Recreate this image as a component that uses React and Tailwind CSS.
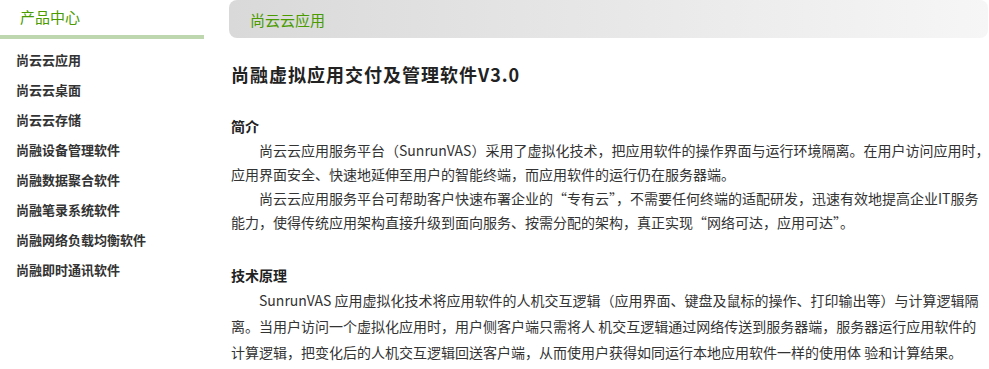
const menu = [
  "尚云云应用",
  "尚云云桌面",
  "尚云云存储",
  "尚融设备管理软件",
  "尚融数据聚合软件",
  "尚融笔录系统软件",
  "尚融网络负载均衡软件",
  "尚融即时通讯软件",
];

const font = { fontFamily: '"Noto Sans CJK SC", "Noto Sans", sans-serif' };

export default function App() {
  return (
    <div lang="zh-CN" className="flex w-[989px] h-[369px] overflow-hidden bg-white" style={font}>
      {/* Sidebar */}
      <div className="w-[204px] shrink-0">
        <div className="h-[35px] pl-[20px] pt-[6px] text-[15px] leading-[22px] text-[#4a9b00]">产品中心</div>
        <div className="h-[4px] bg-[#bfd7ae]" />
        <ul className="mt-[6px] pl-[16px]">
          {menu.map((m) => (
            <li key={m} className="h-[30px] leading-[30px] text-[13px] font-bold text-[#333]">
              {m}
            </li>
          ))}
        </ul>
      </div>

      {/* Main */}
      <div className="ml-[25px] w-[759px] shrink-0">
        <div className="h-[38px] rounded-[8px] bg-gradient-to-r from-[#d9d9d9] to-[#f6f6f6] pl-[21px] leading-[40px] text-[15px] text-[#4a9b00]">
          尚云云应用
        </div>

        <div className="pl-[2px] text-[#333]">
          <h1 className="mt-[24px] text-[18px] leading-[24px] font-bold text-[#222] tracking-[1px]">
            尚融虚拟应用交付及管理软件V3.0
          </h1>

          <h2 className="mt-[28px] text-[14px] leading-[24px] font-bold text-[#222]">简介</h2>
          <p className="text-[14px] leading-[24px] indent-[2em] whitespace-nowrap">
            尚云云应用服务平台（SunrunVAS）采用了虚拟化技术，把应用软件的操作界面与运行环境隔离。在用户访问应用时，
            <br />
            应用界面安全、快速地延伸至用户的智能终端，而应用软件的运行仍在服务器端。
          </p>
          <p className="text-[14px] leading-[24px] indent-[2em] whitespace-nowrap">
            尚云云应用服务平台可帮助客户快速布署企业的“专有云”，不需要任何终端的适配研发，迅速有效地提高企业IT服务
            <br />
            能力，使得传统应用架构直接升级到面向服务、按需分配的架构，真正实现“网络可达，应用可达”。
          </p>

          <h2 className="mt-[29px] text-[14px] leading-[24px] font-bold text-[#222]">技术原理</h2>
          <p className="text-[14px] leading-[26px] indent-[2em] whitespace-nowrap">
            SunrunVAS 应用虚拟化技术将应用软件的人机交互逻辑（应用界面、键盘及鼠标的操作、打印输出等）与计算逻辑隔
            <br />
            离。当用户访问一个虚拟化应用时，用户侧客户端只需将人 机交互逻辑通过网络传送到服务器端，服务器运行应用软件的
            <br />
            计算逻辑，把变化后的人机交互逻辑回送客户端，从而使用户获得如同运行本地应用软件一样的使用体 验和计算结果。
          </p>
        </div>
      </div>
    </div>
  );
}
